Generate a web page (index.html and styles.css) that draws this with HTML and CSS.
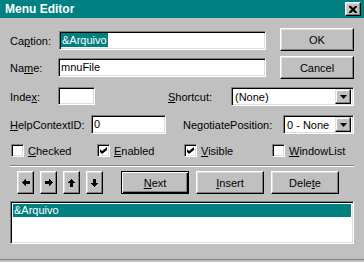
FILE: index.html
```html
<!DOCTYPE html>
<html lang="en">
<head>
  <meta charset="UTF-8" />
  <title>Menu Editor</title>
  <link rel="stylesheet" href="styles.css">
</head>
<body>
  <div class="window">
    <div class="titlebar">
      <span class="title">Menu Editor</span>
      <span class="close">
        <svg width="8" height="7" viewBox="0 0 8 7"><path d="M0 0h2l2 2 2-2h2v1l-2.5 2.5 2.5 2.5v1h-2l-2-2-2 2h-2v-1l2.5-2.5-2.5-2.5z" fill="#000"/></svg>
      </span>
    </div>

    <div class="top">
      <div class="fields">
        <div class="row">
          <label class="lbl lbl-caption">Ca<u>p</u>tion:</label>
          <div class="field field-caption"><span class="sel">&amp;Arquivo</span></div>
        </div>
        <div class="row">
          <label class="lbl lbl-name">Na<u>m</u>e:</label>
          <div class="field field-name">mnuFile</div>
        </div>
      </div>
      <div class="side-buttons">
        <div class="btn">OK</div>
        <div class="btn">Cancel</div>
      </div>
    </div>

    <div class="line line-index">
      <div class="group">
        <label class="lbl lbl-index">Inde<u>x</u>:</label>
        <div class="field field-index"></div>
      </div>
      <div class="group">
        <label class="lbl lbl-shortcut"><u>S</u>hortcut:</label>
        <div class="combo combo-shortcut">
          <span class="combo-text">(None)</span>
          <span class="drop"><svg width="7" height="4" viewBox="0 0 7 4"><path d="M0 0h7l-3.5 4z" fill="#000"/></svg></span>
        </div>
      </div>
    </div>

    <div class="line line-help">
      <div class="group">
        <label class="lbl lbl-help"><u>H</u>elpContextID:</label>
        <div class="field field-help">0</div>
      </div>
      <div class="group">
        <label class="lbl lbl-negotiate">Ne<u>g</u>otiatePosition:</label>
        <div class="combo combo-negotiate">
          <span class="combo-text">0 - None</span>
          <span class="drop"><svg width="7" height="4" viewBox="0 0 7 4"><path d="M0 0h7l-3.5 4z" fill="#000"/></svg></span>
        </div>
      </div>
    </div>

    <div class="checks">
      <div class="check"><span class="box"></span><span><u>C</u>hecked</span></div>
      <div class="check"><span class="box"><svg width="7" height="7" viewBox="0 0 7 7"><path d="M0 2l2 2 5-4v3l-5 4-2-2z" fill="#000"/></svg></span><span><u>E</u>nabled</span></div>
      <div class="check"><span class="box"><svg width="7" height="7" viewBox="0 0 7 7"><path d="M0 2l2 2 5-4v3l-5 4-2-2z" fill="#000"/></svg></span><span><u>V</u>isible</span></div>
      <div class="check"><span class="box"></span><span><u>W</u>indowList</span></div>
    </div>

    <div class="separator"></div>

    <div class="actions">
      <div class="arrows">
        <div class="btn arrow"><svg width="8" height="8" viewBox="0 0 8 8" shape-rendering="crispEdges"><path d="M0 3h1v1h-1zM1 2h1v3h-1zM2 1h1v5h-1zM3 0h1v7h-1zM4 2h4v3h-4z" fill="#000"/></svg></div>
        <div class="btn arrow"><svg width="8" height="8" viewBox="0 0 8 8" shape-rendering="crispEdges"><path transform="matrix(-1 0 0 1 8 0)" d="M0 3h1v1h-1zM1 2h1v3h-1zM2 1h1v5h-1zM3 0h1v7h-1zM4 2h4v3h-4z" fill="#000"/></svg></div>
        <div class="btn arrow"><svg width="8" height="8" viewBox="0 0 8 8" shape-rendering="crispEdges"><path transform="matrix(0 1 1 0 0 0)" d="M0 3h1v1h-1zM1 2h1v3h-1zM2 1h1v5h-1zM3 0h1v7h-1zM4 2h4v3h-4z" fill="#000"/></svg></div>
        <div class="btn arrow"><svg width="8" height="8" viewBox="0 0 8 8" shape-rendering="crispEdges"><path transform="matrix(0 -1 1 0 0 8)" d="M0 3h1v1h-1zM1 2h1v3h-1zM2 1h1v5h-1zM3 0h1v7h-1zM4 2h4v3h-4z" fill="#000"/></svg></div>
      </div>
      <div class="btn wide default"><u>N</u>ext</div>
      <div class="btn wide"><u>I</u>nsert</div>
      <div class="btn wide">Dele<u>t</u>e</div>
    </div>

    <div class="listbox">
      <div class="item selected">&amp;Arquivo</div>
    </div>
  </div>
</body>
</html>
```

FILE: styles.css
```css
* {
  box-sizing: border-box;
}
body {
  margin: 0;
  background: #c0c0c0;
  font-family: "Liberation Sans", Arial, sans-serif;
  font-size: 11px;
  color: #000;
}
u {
  text-decoration: underline;
  text-underline-offset: 1px;
}
.window {
  width: 364px;
  height: 260px;
  background: #c0c0c0;
  border-bottom: 1px solid #808080;
}
.titlebar {
  height: 18px;
  background: #008080;
  display: flex;
  align-items: center;
  padding-left: 5px;
}
.title {
  color: #fff;
  font-weight: bold;
  font-size: 12px;
}
.close {
  margin-left: auto;
  margin-right: 3px;
  width: 16px;
  height: 14px;
  background: #c0c0c0;
  border: 1px solid;
  border-color: #fff #000 #000 #fff;
  box-shadow: inset -1px -1px #808080, inset 1px 1px #dfdfdf;
  display: flex;
  align-items: center;
  justify-content: center;
}

/* common controls */
.field, .combo, .box, .listbox {
  background: #fff;
  border: 1px solid;
  border-color: #808080 #fff #fff #808080;
  box-shadow: inset 1px 1px #000, inset -1px -1px #dfdfdf;
}
.field {
  height: 19px;
  padding: 1px 0 0 2px;
  line-height: 14px;
  white-space: nowrap;
}
.sel {
  background: #008080;
  color: #fff;
  display: inline-block;
  padding: 0 1px;
  margin-left: -1px;
}
.btn {
  background: #c0c0c0;
  border: 1px solid;
  border-color: #fff #000 #000 #fff;
  box-shadow: inset -1px -1px #808080, inset 1px 1px #dfdfdf;
  height: 23px;
  display: flex;
  align-items: center;
  justify-content: center;
}
.lbl {
  flex: none;
}

/* caption / name block */
.top {
  display: flex;
  padding: 10px 10px 0;
}
.fields {
  width: 256px;
  padding-top: 3px;
  display: flex;
  flex-direction: column;
  gap: 8px;
}
.row {
  display: flex;
  align-items: center;
}
.lbl-caption { width: 49px; }
.field-caption { width: 207px; }
.lbl-name { width: 48px; }
.field-name { width: 208px; }
.side-buttons {
  margin-left: auto;
  width: 74px;
  display: flex;
  flex-direction: column;
  gap: 5px;
}

/* index / shortcut and help rows */
.line {
  display: flex;
  justify-content: space-between;
  padding: 0 10px;
}
.line-index { margin-top: 8px; }
.line-help { margin-top: 9px; }
.group {
  display: flex;
  align-items: center;
}
.lbl-index { width: 48px; }
.field-index { width: 37px; height: 18px; align-self: flex-start; }
.lbl-shortcut { width: 63px; }
.lbl-help { width: 81px; }
.field-help { width: 75px; }
.lbl-negotiate { width: 100px; }
.combo {
  height: 19px;
  display: flex;
  align-items: center;
  padding: 2px;
}
.combo-shortcut { width: 123px; }
.combo-negotiate { width: 71px; }
.combo-text {
  flex: 1;
  padding-left: 1px;
  white-space: nowrap;
}
.drop {
  width: 16px;
  height: 15px;
  background: #c0c0c0;
  border: 1px solid;
  border-color: #dfdfdf #000 #000 #dfdfdf;
  box-shadow: inset -1px -1px #808080, inset 1px 1px #fff;
  display: flex;
  align-items: center;
  justify-content: center;
}

/* checkboxes */
.checks {
  margin-top: 10px;
  padding-left: 11px;
  display: grid;
  grid-template-columns: 86px 87px 88px auto;
  height: 13px;
}
.check {
  display: flex;
  align-items: center;
  gap: 4px;
}
.box {
  width: 13px;
  height: 13px;
  display: flex;
  align-items: center;
  justify-content: center;
  flex: none;
}

.separator {
  margin: 8px 10px 0;
  border-top: 1px solid #808080;
  border-bottom: 1px solid #fff;
}

/* arrow and edit buttons */
.actions {
  margin-top: 4px;
  padding-left: 17px;
  display: flex;
  gap: 7px;
}
.arrows {
  display: flex;
  gap: 6px;
  margin-right: 11px;
}
.arrow {
  width: 17px;
}
.wide {
  width: 68px;
}
.default {
  border-color: #000;
  box-shadow: inset 1px 1px #fff, inset -1px -1px #000, inset -2px -2px #808080;
}

.listbox {
  margin: 7px 10px 0;
  height: 43px;
  padding: 2px;
}
.item {
  height: 13px;
  line-height: 13px;
  padding-left: 1px;
}
.selected {
  background: #008080;
  color: #fff;
}
```
